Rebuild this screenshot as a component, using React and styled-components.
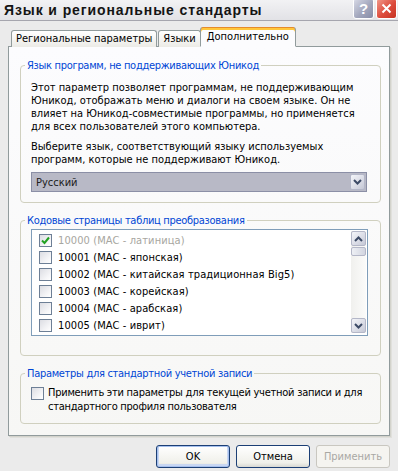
import styled, { createGlobalStyle } from 'styled-components';

const GlobalStyle = createGlobalStyle`
    body{
        margin: 0;
        background: #ebebeb;
        font-family: "DejaVu Sans Condensed", "DejaVu Sans", sans-serif;
    }
`

const Window = styled.div`
    width: 398px;
    height: 471px;
    background-color: #ebebeb;
    display: flex;
    flex-direction: column;
    overflow: hidden;
    font-size: 11px;
    color: #000;
`

const TitleBar = styled.div`
    display: flex;
    align-items: center;
    height: 20px;
    padding-left: 4px;
    background: linear-gradient(#f2f2f4, #e2e2e6);
    border-bottom: 1px solid #a6a6ae;
`

const Title = styled.span`
    flex: 1;
    font-family: "Liberation Sans", Arial, sans-serif;
    font-weight: bold;
    font-size: 14px;
    color: #141414;
    letter-spacing: 0.9px;
`

const TitleButton = styled.div`
    width: 21px;
    height: 21px;
    margin-top: -3px;
    margin-right: ${p => p.$last ? '1px' : '2px'};
    box-sizing: border-box;
    border: 1px solid #fff;
    border-radius: 3px;
    display: flex;
    align-items: center;
    justify-content: center;
    background: ${p => p.$close
        ? 'linear-gradient(135deg, #f19a8c, #dd4b3c 55%, #c63322)'
        : 'linear-gradient(135deg, #d8dae6, #a3a7bd 55%, #878ca6)'};
    color: #fff;
    font-family: "Liberation Sans", Arial, sans-serif;
    font-weight: bold;
    font-size: 15px;
`

const Body = styled.div`
    display: flex;
    flex-direction: column;
    padding: 7px 0 0 8px;
`

const TabStrip = styled.div`
    display: flex;
    align-items: flex-end;
    height: 19px;
    padding-left: 2px;
    margin-bottom: -1px;
    position: relative;
    z-index: 1;
`

const Tab = styled.div`
    box-sizing: border-box;
    height: ${p => p.$active ? '20px' : '17px'};
    padding: ${p => p.$active ? '3px 6px 0' : '1px 4px 0'};
    margin: ${p => p.$active ? '0 -2px 0 -1px' : '0 0 0 1px'};
    border: 1px solid #919b9c;
    border-bottom: ${p => p.$active ? '1px solid #fcfcfe' : 'none'};
    border-top: ${p => p.$active ? 'none' : '1px solid #919b9c'};
    border-radius: 3px 3px 0 0;
    background: ${p => p.$active ? '#fcfcfe' : 'linear-gradient(#ffffff, #ecebe6)'};
    box-shadow: ${p => p.$active ? 'inset 0 1px 0 #e68b2c, inset 0 3px 0 #ffc73c' : 'none'};
    white-space: nowrap;
    line-height: 14px;
    position: relative;
    z-index: ${p => p.$active ? 2 : 1};
`

const Panel = styled.div`
    box-sizing: border-box;
    width: 382px;
    height: 390px;
    border: 1px solid #919b9c;
    background: linear-gradient(#fcfcfe, #f7f7f5);
    box-shadow: 1px 1px 0 #d3d3cc, 2px 2px 0 #e0e0dc;
    padding: 12px 8px 0 11px;
    display: flex;
    flex-direction: column;
`

const Group = styled.fieldset`
    margin: ${p => p.$first ? '0' : '11px 0 0'};
    padding: 0 ${p => p.$right || 13}px ${p => p.$bottom || 10}px 10px;
    border: 1px solid #d0d0bf;
    border-radius: 4px;
    min-width: 0;
`

const Legend = styled.legend`
    color: #0046d5;
    padding: 0 2px;
    margin-left: -6px;
    line-height: 13px;
    letter-spacing: -0.3px;
`

const Text = styled.p`
    margin: ${p => p.$gap || 6}px 0 0;
    line-height: 13px;
    white-space: nowrap;
`

const Select = styled.div`
    box-sizing: border-box;
    margin-top: 6px;
    height: 20px;
    border: 1px solid #8b8fa6;
    background: #b8b9c6;
    display: flex;
    align-items: center;
    padding: 1px;
`

const SelectValue = styled.span`
    flex: 1;
    padding-left: 3px;
    color: #202020;
`

const ArrowButton = styled.div`
    box-sizing: border-box;
    width: 15px;
    height: ${p => p.$h || 15}px;
    border: 1px solid #b4b7c8;
    border-radius: 2px;
    background: linear-gradient(135deg, #f4f5f9, #d9dbe5 60%, #c5c8d6);
    display: flex;
    align-items: center;
    justify-content: center;
`

const ListBox = styled.div`
    box-sizing: border-box;
    margin-top: 2px;
    height: 107px;
    border: 1px solid #7f9db9;
    background: #fff;
    display: flex;
`

const Items = styled.ul`
    flex: 1;
    list-style: none;
    margin: 0;
    padding: 2px 0 0 7px;
    overflow: hidden;
`

const Item = styled.li`
    display: flex;
    align-items: center;
    height: 17px;
    white-space: nowrap;
    letter-spacing: 0.1px;
    color: ${p => p.$disabled ? '#a7a6a0' : '#000'};
`

const Check = styled.span`
    box-sizing: border-box;
    flex: none;
    width: 13px;
    height: 13px;
    margin-right: ${p => p.$gap || 6}px;
    margin-top: ${p => p.$top || 0}px;
    border: 1px solid #6d7f96;
    background: linear-gradient(135deg, #dcdde3, #f6f6f8 70%, #ffffff);
    display: flex;
    align-items: center;
    justify-content: center;
`

const ScrollBar = styled.div`
    width: 15px;
    margin: 1px 1px 2px 0;
    display: flex;
    flex-direction: column;
    background: linear-gradient(90deg, #f0f0ee, #fbfbfa);
`

const Thumb = styled.div`
    box-sizing: border-box;
    height: 9px;
    margin-top: 1px;
    border: 1px solid #b4b7c8;
    border-radius: 2px;
    background: linear-gradient(90deg, #eef0f5, #d2d5e0);
`

const Spacer = styled.div`
    flex: 1;
`

const CheckRow = styled.div`
    display: flex;
    align-items: flex-start;
    margin-top: 6px;
`

const CheckLabel = styled.span`
    line-height: 14px;
    white-space: nowrap;
    letter-spacing: -0.25px;
`

const ButtonRow = styled.div`
    display: flex;
    justify-content: flex-end;
    gap: 6px;
    margin-top: 9px;
    padding-right: 8px;
`

const Button = styled.button`
    box-sizing: border-box;
    width: 74px;
    height: 23px;
    padding: 0;
    font: inherit;
    border-radius: 3px;
    border: 1px solid ${p => p.$disabled ? '#c9c7c0' : '#1c3f75'};
    color: ${p => p.$disabled ? '#a9a8a4' : '#000'};
    background: ${p => p.$disabled ? '#f5f4f0' : 'linear-gradient(#ffffff, #f0f0ea 80%, #d8d8d2)'};
    box-shadow: ${p => p.$default ? 'inset 0 0 0 1px #a6c0ee, inset 0 -1px 0 2px #c9d7f2' : 'none'};
`

function Chevron({up}){
    return(
        <svg width="9" height="6" viewBox="0 0 9 6">
            <polyline points={up ? '1,5 4.5,1.5 8,5' : '1,1 4.5,4.5 8,1'} fill="none" stroke="#3c4a66" strokeWidth="2" />
        </svg>
    )
}

const codePages = [
    '10001 (MAC - японская)',
    '10002 (MAC - китайская традиционная Big5)',
    '10003 (MAC - корейская)',
    '10004 (MAC - арабская)',
    '10005 (MAC - иврит)',
]

function App(){
    return(
        <>
        <GlobalStyle />
        <Window>
            <TitleBar>
                <Title>Язык и региональные стандарты</Title>
                <TitleButton>?</TitleButton>
                <TitleButton $close $last>
                    <svg width="11" height="11" viewBox="0 0 11 11">
                        <path d="M1.5 1.5 L9.5 9.5 M9.5 1.5 L1.5 9.5" stroke="#fff" strokeWidth="2" />
                    </svg>
                </TitleButton>
            </TitleBar>
            <Body>
                <TabStrip>
                    <Tab>Региональные параметры</Tab>
                    <Tab>Языки</Tab>
                    <Tab $active>Дополнительно</Tab>
                </TabStrip>
                <Panel>
                    <Group $first>
                        <Legend>Язык программ, не поддерживающих Юникод</Legend>
                        <Text $gap={9}>
                            Этот параметр позволяет программам, не поддерживающим<br />
                            Юникод, отображать меню и диалоги на своем языке. Он не<br />
                            влияет на Юникод-совместимые программы, но применяется<br />
                            для всех пользователей этого компьютера.
                        </Text>
                        <Text $gap={7}>
                            Выберите язык, соответствующий языку используемых<br />
                            программ, которые не поддерживают Юникод.
                        </Text>
                        <Select>
                            <SelectValue>Русский</SelectValue>
                            <ArrowButton $h={16}><Chevron /></ArrowButton>
                        </Select>
                    </Group>
                    <Group $right={12} $bottom={19}>
                        <Legend>Кодовые страницы таблиц преобразования</Legend>
                        <ListBox>
                            <Items>
                                <Item $disabled>
                                    <Check>
                                        <svg width="9" height="9" viewBox="0 0 9 9">
                                            <polyline points="1,4.5 3.5,7 8,1.5" fill="none" stroke="#21a121" strokeWidth="2" />
                                        </svg>
                                    </Check>
                                    10000 (MAC - латиница)
                                </Item>
                                {codePages.map((page, index) =>
                                    <Item key={index}>
                                        <Check />
                                        {page}
                                    </Item>
                                )}
                            </Items>
                            <ScrollBar>
                                <ArrowButton><Chevron up /></ArrowButton>
                                <Thumb />
                                <Spacer />
                                <ArrowButton><Chevron /></ArrowButton>
                            </ScrollBar>
                        </ListBox>
                    </Group>
                    <Group $bottom={9}>
                        <Legend>Параметры для стандартной учетной записи</Legend>
                        <CheckRow>
                            <Check $gap={4} $top={1} />
                            <CheckLabel>
                                Применить эти параметры для текущей учетной записи и для<br />
                                стандартного профиля пользователя
                            </CheckLabel>
                        </CheckRow>
                    </Group>
                </Panel>
                <ButtonRow>
                    <Button $default>OK</Button>
                    <Button>Отмена</Button>
                    <Button $disabled>Применить</Button>
                </ButtonRow>
            </Body>
        </Window>
        </>
    )
}

export default App
